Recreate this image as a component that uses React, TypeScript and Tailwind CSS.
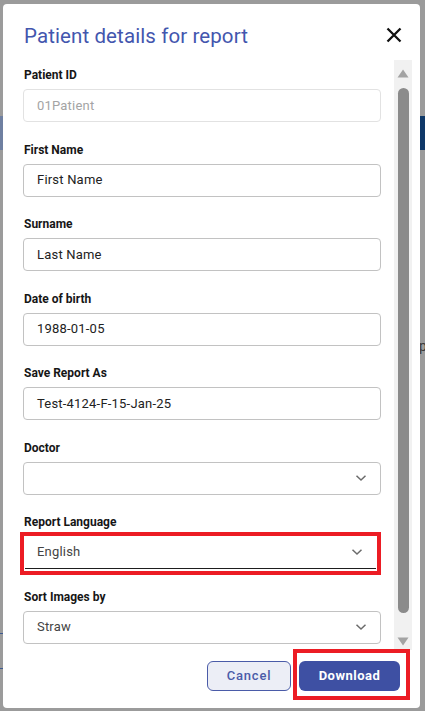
import React from "react";

const font = { fontFamily: "Roboto, 'Liberation Sans', Arial, sans-serif" };

function Chevron() {
  return (
    <svg width="12" height="8" viewBox="0 0 12 8" className="shrink-0">
      <path d="M1.5 1.8 L6 6 L10.5 1.8" fill="none" stroke="#6b6b6b" strokeWidth="1.5" />
    </svg>
  );
}

function Label({ children }: { children: React.ReactNode }) {
  return <div className="text-[12px] leading-[14px] font-bold text-[#161616] pl-[1px]">{children}</div>;
}

function TextField({ label, value, disabled }: { label: string; value: string; disabled?: boolean }) {
  return (
    <div className="flex flex-col">
      <Label>{label}</Label>
      <div
        className={
          "mt-[7px] h-[33px] rounded-[4px] border flex items-center pl-[13px] text-[13px] tracking-[0.2px] " +
          (disabled ? "border-[#e2e2e2] text-[#a4a4a4]" : "border-[#c2c2c2] text-[#222222]")
        }
      >
        {value}
      </div>
    </div>
  );
}

function SelectField({ label, value }: { label: string; value: string }) {
  return (
    <div className="flex flex-col">
      <Label>{label}</Label>
      <div className="mt-[7px] h-[33px] rounded-[4px] border border-[#c2c2c2] flex items-center justify-between pl-[13px] pr-[13px] text-[13px] tracking-[0.2px] text-[#444444]">
        <span>{value}</span>
        <Chevron />
      </div>
    </div>
  );
}

function UnderlineSelect({ label, value }: { label: string; value: string }) {
  return (
    <div className="flex flex-col">
      <Label>{label}</Label>
      <div className="mt-[7px] h-[33px] flex items-center justify-between pl-[12px] pr-[13px] text-[13px] tracking-[0.2px] text-[#444444] border-b-[1.5px] border-[#1e1e1e] ml-[2px] mr-[5px]">
        <span>{value}</span>
        <Chevron />
      </div>
    </div>
  );
}

export default function App() {
  return (
    <div className="relative w-[425px] h-[711px] overflow-hidden bg-[#9b9b9b]" style={font}>
      {/* dimmed page behind */}
      <div className="absolute left-0 top-[116px] w-[425px] h-[34px] bg-[#0f3868]" />
      <div className="absolute left-0 top-[116px] w-[4px] h-[34px] bg-[#6f80a1]" />
      <div className="absolute left-0 top-[633px] w-[4px] h-[1px] bg-[#3d5a90]" />
      <div className="absolute left-0 top-[668px] w-[4px] h-[1px] bg-[#3d5a90]" />
      <div className="absolute left-[419px] top-[336px] text-[14px] text-[#3a3a3a]">p</div>

      <div className="relative pl-[3px] pt-[4px]">
        <div className="w-[416.5px] h-[704px] bg-white rounded-[4px] flex flex-col">
          {/* header */}
          <div className="h-[56px] flex items-center justify-between pl-[21px] pr-[18px] pt-[7px]">
            <div className="text-[20.5px] leading-[24px] text-[#4356ae] tracking-[0.1px]">Patient details for report</div>
            <svg width="16" height="16" viewBox="0 0 16 16" className="-mt-[2px]">
              <path d="M1.5 1.5 L14.5 14.5 M14.5 1.5 L1.5 14.5" stroke="#111" strokeWidth="2.3" />
            </svg>
          </div>

          {/* body */}
          <div className="h-[590px] flex">
            <div className="w-[378px] pl-[20px] pt-[8px] flex flex-col gap-[20.5px]">
              <TextField label="Patient ID" value="01Patient" disabled />
              <TextField label="First Name" value="First Name" />
              <TextField label="Surname" value="Last Name" />
              <TextField label="Date of birth" value="1988-01-05" />
              <TextField label="Save Report As" value="Test-4124-F-15-Jan-25" />
              <SelectField label="Doctor" value="" />
              <UnderlineSelect label="Report Language" value="English" />
              <SelectField label="Sort Images by" value="Straw" />
            </div>
            <div className="ml-[13px] w-[18px] bg-[#f1f1f1] flex flex-col items-center pt-[9px] pb-[4px]">
              <svg width="12" height="9" viewBox="0 0 12 9">
                <path d="M6 0.5 L11.5 8.5 L0.5 8.5 Z" fill="#a3a3a3" />
              </svg>
              <div className="mt-[10px] w-[11px] h-[525px] rounded-full bg-[#8b8b8b]" />
              <div className="flex-1" />
              <svg width="12" height="9" viewBox="0 0 12 9">
                <path d="M0.5 0.5 L11.5 0.5 L6 8.5 Z" fill="#a3a3a3" />
              </svg>
            </div>
          </div>

          {/* footer */}
          <div className="flex justify-end gap-[8px] pt-[11px] pr-[19.5px]">
            <button className="w-[84px] h-[30px] rounded-[6px] border border-[#4a5ba8] bg-[#eceef6] text-[#4a5ba8] text-[13px] font-medium tracking-[0.8px]">
              Cancel
            </button>
            <button className="w-[101px] h-[30px] rounded-[6px] bg-[#3e50a3] text-white text-[13px] font-bold tracking-[0.5px]">
              Download
            </button>
          </div>
        </div>
      </div>

      {/* annotation boxes */}
      <div className="absolute left-[20px] top-[532px] w-[361px] h-[43px] border-[4.5px] border-[#ec1c24]" />
      <div className="absolute left-[293px] top-[649px] w-[117px] h-[51px] border-[4.5px] border-[#ec1c24]" />
    </div>
  );
}
